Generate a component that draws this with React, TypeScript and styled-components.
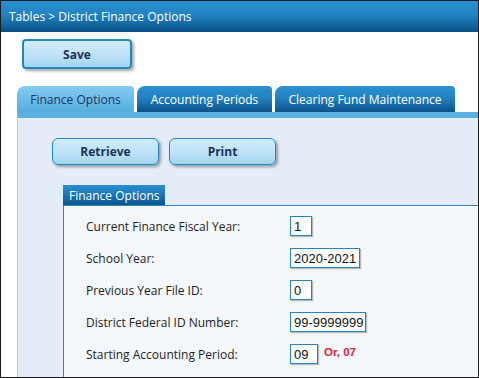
import React from "react"
import styled, { createGlobalStyle } from "styled-components"

const GlobalStyle = createGlobalStyle`
  html, body {
    margin: 0;
    padding: 0;
    background: #fff;
  }
  body {
    font-family: "Open Sans", "Segoe UI", sans-serif;
  }
`

const Frame = styled.div`
  width: 479px;
  height: 378px;
  box-sizing: border-box;
  border: 1px solid #1b1b1b;
  background: #fff;
  display: flex;
  flex-direction: column;
  overflow: hidden;
`

const TitleBar = styled.div`
  height: 31px;
  flex: none;
  display: flex;
  align-items: center;
  padding-left: 8px;
  background: linear-gradient(#2a90cf 0%, #2182c2 45%, #0a5087 100%);
  color: #fff;
  font-size: 12px;
`

const Toolbar = styled.div`
  flex: none;
  padding: 7px 0 0 21px;
`

const Button = styled.button<{ $width: number; $primary?: boolean }>`
  width: ${(p) => p.$width}px;
  height: ${(p) => (p.$primary ? 30 : 27)}px;
  box-sizing: border-box;
  border: ${(p) => (p.$primary ? 2 : 1)}px solid #2188c6;
  border-radius: ${(p) => (p.$primary ? 4 : 6)}px;
  background: linear-gradient(#d2ecfa 0%, #bfe3f7 50%, #a3d4ef 100%);
  box-shadow: 2px 2px 3px rgba(0, 0, 0, 0.35);
  color: #1b3358;
  font-family: "Open Sans", sans-serif;
  font-weight: 700;
  font-size: 12px;
  padding: 0;
  cursor: pointer;
`

const TabStrip = styled.div`
  flex: none;
  display: flex;
  gap: 3px;
  margin-top: 17px;
  padding-left: 16px;
`

const Tab = styled.div<{ $active?: boolean; $width: number }>`
  width: ${(p) => p.$width}px;
  height: 26px;
  box-sizing: border-box;
  display: flex;
  align-items: center;
  justify-content: center;
  border-radius: 8px 4px 0 0;
  font-size: 12px;
  color: ${(p) => (p.$active ? "#1c3560" : "#fff")};
  background: ${(p) =>
    p.$active
      ? "linear-gradient(#83caf0 0%, #6dbde9 50%, #55aedf 100%)"
      : "linear-gradient(#2a91d0 0%, #2283c3 45%, #0b5189 100%)"};
`

const Panel = styled.div`
  flex: 1;
  margin-left: 16px;
  border-top: 6px solid #5bb0e0;
  border-left: 1px solid #a9d0ea;
  background: #e4edf7;
  padding: 20px 0 0 34px;
  display: flex;
  flex-direction: column;
`

const ButtonRow = styled.div`
  display: flex;
  gap: 10px;
`

const Group = styled.div`
  flex: 1;
  margin: 20px 0 0 11px;
  display: flex;
  flex-direction: column;
`

const Legend = styled.div`
  align-self: flex-start;
  height: 20px;
  width: 102px;
  box-sizing: border-box;
  padding-left: 6px;
  display: flex;
  align-items: center;
  background: linear-gradient(#2a8fcf 0%, #1a76b6 50%, #0a548c 100%);
  color: #fff;
  font-size: 12px;
`

const GroupBody = styled.div`
  flex: 1;
  border-top: 1px solid #2c86c4;
  border-left: 1px solid #2c86c4;
  background: #f4f7fc;
  padding: 10px 0 0 22px;
  display: flex;
  flex-direction: column;
  gap: 12px;
`

const Row = styled.div`
  display: flex;
  align-items: center;
  height: 20px;
`

const Label = styled.span`
  width: 204px;
  flex: none;
  color: #1e1e1e;
  font-size: 12px;
`

const Field = styled.input<{ $width: number }>`
  width: ${(p) => p.$width}px;
  height: 20px;
  box-sizing: border-box;
  border: 1px solid #2485c6;
  background: #fff;
  box-shadow: 1px 1px 1px rgba(0, 0, 0, 0.25);
  padding: 0 0 0 3px;
  margin: 0;
  font-family: "Liberation Sans", Arial, sans-serif;
  font-size: 13px;
  color: #111;
  outline: none;
`

const Hint = styled.span`
  margin-left: 6px;
  margin-top: -5px;
  color: #e8202a;
  font-family: "Liberation Sans", Arial, sans-serif;
  font-weight: 700;
  font-size: 11.5px;
`

const fields = [
  { label: "Current Finance Fiscal Year:", value: "1", width: 22 },
  { label: "School Year:", value: "2020-2021", width: 70 },
  { label: "Previous Year File ID:", value: "0", width: 22 },
  { label: "District Federal ID Number:", value: "99-9999999", width: 76 },
  { label: "Starting Accounting Period:", value: "09", width: 28, hint: "Or, 07" },
]

export default function App() {
  return (
    <>
      <GlobalStyle />
      <Frame>
        <TitleBar>Tables &gt; District Finance Options</TitleBar>
        <Toolbar>
          <Button $primary $width={110}>
            Save
          </Button>
        </Toolbar>
        <TabStrip>
          <Tab $active $width={117}>
            Finance Options
          </Tab>
          <Tab $width={135}>Accounting Periods</Tab>
          <Tab $width={180}>Clearing Fund Maintenance</Tab>
        </TabStrip>
        <Panel>
          <ButtonRow>
            <Button $width={107}>Retrieve</Button>
            <Button $width={107}>Print</Button>
          </ButtonRow>
          <Group>
            <Legend>Finance Options</Legend>
            <GroupBody>
              {fields.map((f) => (
                <Row key={f.label}>
                  <Label>{f.label}</Label>
                  <Field $width={f.width} defaultValue={f.value} readOnly />
                  {f.hint && <Hint>{f.hint}</Hint>}
                </Row>
              ))}
            </GroupBody>
          </Group>
        </Panel>
      </Frame>
    </>
  )
}
